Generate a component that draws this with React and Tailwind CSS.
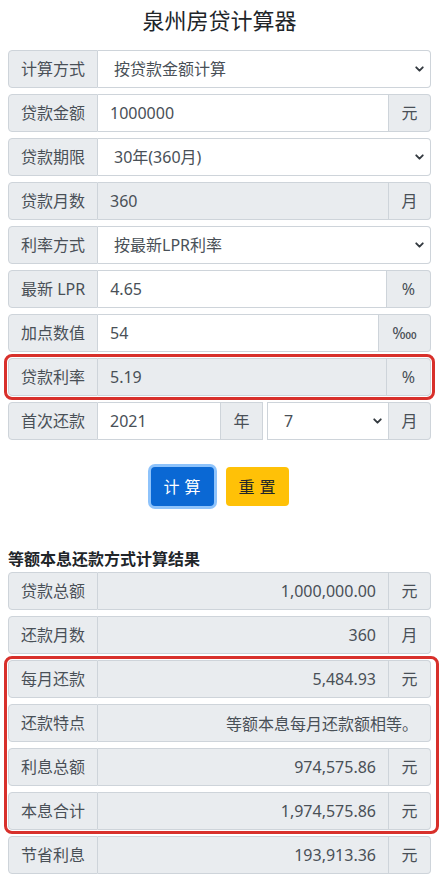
import { ChevronDown } from "lucide-react";

const font = {
  fontFamily: '"Noto Sans", "Noto Sans CJK SC", sans-serif',
};

// 左侧/右侧的灰色标签
const Addon = ({ children, className = "" }) => (
  <span
    className={
      "flex items-center justify-center px-3 bg-[#e9ecef] border border-[#ced4da] text-[#495057] text-[16px] whitespace-nowrap " +
      className
    }
  >
    {children}
  </span>
);

const TextInput = ({ value, readOnly, right, className = "flex-1" }) => (
  <input
    value={value}
    readOnly
    className={
      "min-w-0 h-full px-3 border border-l-0 border-[#ced4da] text-[16px] text-[#495057] outline-none " +
      (readOnly ? "bg-[#e9ecef] " : "bg-white ") +
      (right ? "text-right " : "") +
      className
    }
    style={font}
  />
);

const Select = ({ value, className = "flex-1" }) => (
  <div className={"relative min-w-0 h-full " + className}>
    <select
      defaultValue={value}
      className="appearance-none w-full h-full pl-4 pr-8 bg-white border border-[#ced4da] text-[16px] text-[#495057] outline-none"
      style={font}
    >
      <option>{value}</option>
    </select>
    <ChevronDown
      size={13}
      strokeWidth={3.5}
      className="absolute right-[5px] top-1/2 -translate-y-1/2 text-[#343a40] pointer-events-none"
    />
  </div>
);

const Row = ({ children }) => (
  <div className="flex h-[38px] mb-[6px]">{children}</div>
);

const ResultRow = ({ label, value, unit }) => (
  <Row>
    <Addon className="rounded-l">{label}</Addon>
    <TextInput value={value} readOnly right className={unit ? "flex-1" : "flex-1 rounded-r"} />
    {unit && <Addon className="border-l-0 rounded-r w-[42px]">{unit}</Addon>}
  </Row>
);

const sel = "flex-1 [&>select]:rounded-r [&>select]:border-l-0";

export default function App() {
  return (
    <div className="w-[443px] min-h-[886px] bg-white pl-2 pr-3" style={font}>
      <h1 className="text-center text-[22px] leading-[26px] pt-[7px] mb-[17px] text-[#212529]">
        泉州房贷计算器
      </h1>

      {/* 输入区 */}
      <Row>
        <Addon className="rounded-l">计算方式</Addon>
        <Select value="按贷款金额计算" className={sel} />
      </Row>
      <Row>
        <Addon className="rounded-l">贷款金额</Addon>
        <TextInput value="1000000" />
        <Addon className="border-l-0 rounded-r w-[42px]">元</Addon>
      </Row>
      <Row>
        <Addon className="rounded-l">贷款期限</Addon>
        <Select value="30年(360月)" className={sel} />
      </Row>
      <Row>
        <Addon className="rounded-l">贷款月数</Addon>
        <TextInput value="360" readOnly />
        <Addon className="border-l-0 rounded-r w-[42px]">月</Addon>
      </Row>
      <Row>
        <Addon className="rounded-l">利率方式</Addon>
        <Select value="按最新LPR利率" className={sel} />
      </Row>
      <Row>
        <Addon className="rounded-l">最新 LPR</Addon>
        <TextInput value="4.65" />
        <Addon className="border-l-0 rounded-r w-[44px]">%</Addon>
      </Row>
      <Row>
        <Addon className="rounded-l">加点数值</Addon>
        <TextInput value="54" />
        <Addon className="border-l-0 rounded-r w-[52px]">‱</Addon>
      </Row>
      <div className="rounded-sm outline-[3px] outline-solid outline-[#d8302b] outline-offset-[1px] mb-[6px]">
        <div className="flex h-[38px]">
          <Addon className="rounded-l">贷款利率</Addon>
          <TextInput value="5.19" readOnly />
          <Addon className="border-l-0 rounded-r w-[44px]">%</Addon>
        </div>
      </div>
      <Row>
        <Addon className="rounded-l">首次还款</Addon>
        <TextInput value="2021" className="w-[123px] flex-none" />
        <Addon className="border-l-0 w-[42px]">年</Addon>
        <Select value="7" className="ml-[4px] flex-1" />
        <Addon className="border-l-0 rounded-r w-[42px]">月</Addon>
      </Row>

      {/* 按钮 */}
      <div className="flex justify-center gap-3 mt-[27px]">
        <button className="h-[39px] w-[63px] rounded bg-[#0a68d4] text-white text-[16px] ring-[3px] ring-[#8ec3fb] tracking-[5px] pl-[5px]">
          计算
        </button>
        <button className="h-[39px] w-[63px] rounded bg-[#ffc107] text-[#212529] text-[16px] tracking-[5px] pl-[5px]">
          重置
        </button>
      </div>

      {/* 结果 */}
      <h2 className="mt-[41px] mb-[1px] text-[16px] leading-[24px] font-bold text-[#212529]">
        等额本息还款方式计算结果
      </h2>
      <ResultRow label="贷款总额" value="1,000,000.00" unit="元" />
      <ResultRow label="还款月数" value="360" unit="月" />
      <div className="rounded-sm outline-[3px] outline-solid outline-[#d8302b] outline-offset-[1px] -mr-[4px] pr-[4px] mb-[6px]">
        <ResultRow label="每月还款" value="5,484.93" unit="元" />
        <ResultRow label="还款特点" value="等额本息每月还款额相等。" />
        <ResultRow label="利息总额" value="974,575.86" unit="元" />
        <div className="flex h-[38px]">
          <Addon className="rounded-l">本息合计</Addon>
          <TextInput value="1,974,575.86" readOnly right />
          <Addon className="border-l-0 rounded-r w-[42px]">元</Addon>
        </div>
      </div>
      <ResultRow label="节省利息" value="193,913.36" unit="元" />
    </div>
  );
}
